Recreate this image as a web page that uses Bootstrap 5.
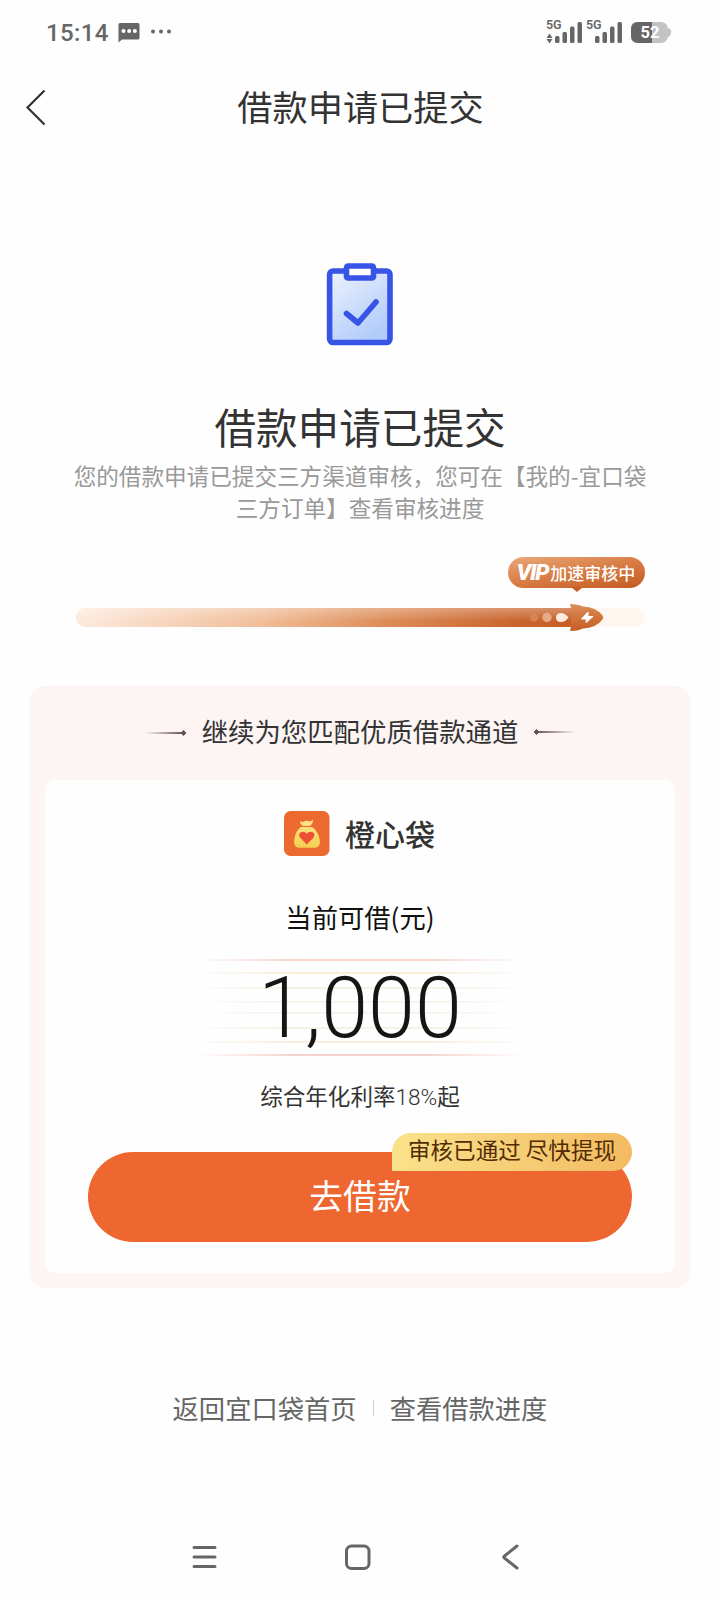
<!DOCTYPE html>
<html lang="zh-CN">
<head>
<meta charset="utf-8">
<meta name="viewport" content="width=device-width, initial-scale=1">
<title>借款申请已提交</title>
<link href="https://cdn.jsdelivr.net/npm/bootstrap@5.3.0/dist/css/bootstrap.min.css" rel="stylesheet">
<style>
body{font-family:"Noto Sans CJK SC",sans-serif;background:#fefefe;color:#333;width:720px;height:1600px;overflow:hidden}
svg{display:block;flex:none}
.latin{font-family:Roboto,sans-serif}
.status{height:62px;padding:2px 48px 0 46px;color:#666}
.clock{font-size:24px;font-weight:500;letter-spacing:.4px;line-height:28px;padding-top:1px}
.topbar{height:92px}
.topbar h1{font-size:35.2px;line-height:50px;margin:0 0 4px 1px}
.back{left:24px;top:25px}
.result{height:532px;padding-top:108px}
.result h2{font-size:41.6px;line-height:56px;margin:52px 0 0}
.desc{font-size:22.6px;line-height:32px;width:580px;color:#999;margin-top:6px}
.track{width:569px;height:19px;border-radius:10px;background:#fff6f0;margin-top:84px}
.fill{width:496px;height:19px;border-radius:10px 0 0 10px;background:linear-gradient(180deg,rgba(255,255,255,.3),rgba(255,255,255,0) 70%),linear-gradient(90deg,#fdeadd,#f0bd98 38%,#dd8d58 62%,#c9622b 90%,#c75e25)}
.rocket{left:450px;top:-5px}
.vip{right:0;top:-51px;width:137px;height:31px;border-radius:16px;background:linear-gradient(170deg,#e9a878,#d87c44 50%,#c35a22);color:#fff}
.vip:after{content:"";position:absolute;left:63px;top:30px;border:6px solid transparent;border-top:5px solid #c66027;border-bottom:0}
.vip b{font-family:Roboto,sans-serif;font-style:italic;font-weight:900;font-size:22.5px;letter-spacing:-1.2px;line-height:31px;margin-right:2px}
.vip span{font-size:17px;line-height:31px;font-weight:500;padding-bottom:1px}
.panel{width:660px;height:602px;margin-left:30px;border-radius:15px;background:#fdf5f3;padding:0 15px 14px}
.panel-title{height:94px;gap:14px;font-size:26.4px;line-height:38px;padding-bottom:4px}
.offer{height:493px;border-radius:10px;background:#fefefe;padding-top:31px}
.brand{gap:15px;height:46px}
.brand svg{margin-left:-1px}
.brand strong{font-size:30px;line-height:44px;font-weight:500;padding-bottom:3px}
.avail{font-size:26.3px;line-height:38px;color:#111;margin-top:41px}
.amount{width:350px;height:97px;margin-top:22px;background:#fefefe}
.stripe{left:0;top:1px}
.amount .latin{font-size:84.4px;font-weight:300;line-height:101px;color:#151515;position:relative}
.rate{font-size:22.56px;line-height:32px;margin-top:24px}
.rate .latin{font-weight:300}
.go{width:544px;height:90px;margin-top:38px;border:0;border-radius:45px;background:#ee6630;color:#fff;font-size:33.8px;line-height:48px;padding:0 0 5px}
.tip{right:0;top:-19px;width:240px;height:38px;border-radius:19px 19px 19px 0;background:linear-gradient(90deg,#f9e28b,#f3bb62);color:#522c04;font-size:22.56px;line-height:33px}
.links{height:50px;margin-top:95px;font-size:26.3px;line-height:38px;color:#666}
.links a{color:#666;text-decoration:none}
.links i{width:1px;height:16px;background:#ccc;margin:2px 16px}
.sysnav{margin-top:109px;padding-left:189px;gap:122px}
</style>
</head>
<body>
<header class="status d-flex align-items-center">
  <span class="clock latin">15:14</span>
  <svg class="ms-2" width="60" height="24" viewBox="0 0 60 24" fill="#666"><path d="M3 3h18q1.500 0 1.500 1.500v13.500q0 1.500-1.500 1.500H5l-3.500 3V4.500Q1.500 3 3 3z"/><g fill="#fff"><circle cx="6.500" cy="11" r="2"/><circle cx="12.200" cy="11" r="2"/><circle cx="17.900" cy="11" r="2"/></g><circle cx="36" cy="11.500" r="2"/><circle cx="44" cy="11.500" r="2"/><circle cx="52" cy="11.500" r="2"/></svg>
  <svg class="ms-auto" width="126" height="28" viewBox="0 0 126 28" fill="#666">
    <g font-family="Roboto" font-weight="600" font-size="12.500"><text x="0" y="10.500" textLength="15.500">5G</text><text x="40" y="10.500" textLength="15.500">5G</text></g>
    <path d="M3.500 15.500l3 4.500h-6zM3.500 25.500l-3-4.500h6z"/>
    <g id="bars"><rect x="9" y="18" width="4.500" height="7" rx="1.500"/><rect x="16.500" y="14" width="4.500" height="11" rx="1.500"/><rect x="24" y="8.500" width="4.500" height="16.500" rx="1.500"/><rect x="31.500" y="4" width="4.500" height="21" rx="1.500"/></g>
    <use href="#bars" x="40"/>
    <rect x="85" y="4" width="37" height="21" rx="7" fill="#c3c3c3"/><path d="M122 10q4 1 3 5-1 4-3 4z" fill="#c3c3c3"/><path d="M92 4h14v21H92q-7 0-7-7v-7q0-7 7-7z"/>
    <text x="94.500" y="20" fill="#fff" font-family="Roboto" font-weight="700" font-size="16.500">52</text>
  </svg>
</header>
<nav class="topbar position-relative d-flex align-items-center justify-content-center">
  <svg class="back position-absolute" width="24" height="40" viewBox="0 0 24 40" fill="none" stroke="#333" stroke-width="2.200"><path d="M20.500 3.500 3.500 20.500l17 17"/></svg>
  <h1 class="fw-normal">借款申请已提交</h1>
</nav>
<section class="result d-flex flex-column align-items-center text-center">
  <svg width="68" height="84" viewBox="0 0 68 84"><defs><linearGradient id="paper" x1="0" y1="0" x2=".6" y2="1"><stop offset="0" stop-color="#edf3fe"/><stop offset="1" stop-color="#b1cbfa"/></linearGradient></defs><g stroke="#3854e6" stroke-width="5.600" stroke-linejoin="round" stroke-linecap="round"><rect x="3.600" y="9" width="60.400" height="71.500" rx="3.500" fill="url(#paper)"/><rect x="20.500" y="4" width="27" height="12" rx="1.500" fill="#fff"/><path d="M20.500 51.500 32 61l18-21" fill="none"/></g></svg>
  <h2 class="fw-normal">借款申请已提交</h2>
  <p class="desc mb-0">您的借款申请已提交三方渠道审核，您可在【我的-宜口袋三方订单】查看审核进度</p>
  <div class="track position-relative">
    <div class="fill"></div>
    <svg class="rocket position-absolute" width="80" height="29" viewBox="0 0 80 29"><defs><linearGradient id="hull" x1="0" y1="0" x2="0" y2="1"><stop offset="0" stop-color="#dc8e59"/><stop offset="1" stop-color="#c45c22"/></linearGradient></defs><circle cx="8" cy="14.500" r="4" fill="#d98253"/><circle cx="21" cy="14.500" r="4.700" fill="#e7aa86"/><path d="M30 14.500q0-4.500 5-4.500 4 0 7.500 4.500-3.500 4.500-7.500 4.500-5 0-5-4.500z" fill="#fdebdd"/><path d="M44 1q8 0 13 2.500 13 .5 19.500 9 1.200 2 0 4-6.500 8.500-19.500 9-5 2.500-13 2.500l1-4.500V5z" fill="url(#hull)"/><path d="m62 9-6.500 7h5l-.5 3.500 7-6h-5z" fill="#fff" stroke="#fff"/></svg>
    <div class="vip position-absolute d-flex align-items-center justify-content-center"><b>VIP</b><span>加速审核中</span></div>
  </div>
</section>
<main class="panel">
  <div class="panel-title d-flex align-items-center justify-content-center">
    <svg width="44" height="10" viewBox="0 0 44 10"><defs><linearGradient id="fade"><stop offset="0" stop-color="#655" stop-opacity="0"/><stop offset="1" stop-color="#655"/></linearGradient></defs><path d="M1 6h38v2H1z" fill="url(#fade)"/><path d="m39.500 4.500 2.500 2.500-2.500 2.500-2.500-2.500z" fill="#655" stroke="#655"/></svg>
    <span>继续为您匹配优质借款通道</span>
    <svg width="44" height="10" viewBox="0 0 44 10"><g transform="matrix(-1 0 0 1 44 -1)"><path d="M1 6h38v2H1z" fill="url(#fade)"/><path d="m39.500 4.500 2.500 2.500-2.500 2.500-2.500-2.500z" fill="#655" stroke="#655"/></g></svg>
  </div>
  <div class="offer d-flex flex-column align-items-center">
    <div class="brand d-flex align-items-center">
      <svg width="46" height="46" viewBox="0 0 46 46"><defs><linearGradient id="bag" x1="0" y1="0" x2="0" y2="1"><stop offset="0" stop-color="#ffe590"/><stop offset="1" stop-color="#f7cf4e"/></linearGradient></defs><rect width="45.500" height="45" rx="6.500" fill="#ec6a30"/><path d="M16 10q3 2 6-.5 4 2 7-.8 0 4-3 6 9 5 10 15.500 0 6.500-5 6.500H15q-5 0-5-6.500Q11 19 19 14.500q-3-1.500-3-4.500z" fill="url(#bag)"/><path d="M17.500 15.500h10" stroke="#ec6a30" stroke-width="1"/><path d="M22.800 33.500 16 26.500q-2-3 .7-5.200 3.600-1.600 6.100 1.500 2.500-3.100 6.100-1.500 2.700 2.200.7 5.200z" fill="#ed5135"/></svg>
      <strong>橙心袋</strong>
    </div>
    <div class="avail">当前可借(元)</div>
    <div class="amount position-relative text-center">
      <svg class="stripe position-absolute" width="350" height="97" viewBox="0 0 350 97"><defs><linearGradient id="r"><stop offset="0" stop-color="#f6d3cd" stop-opacity="0"/><stop offset=".3" stop-color="#f6d3cd"/><stop offset=".7" stop-color="#f6d3cd"/><stop offset="1" stop-color="#f6d3cd" stop-opacity="0"/></linearGradient><linearGradient id="y"><stop offset="0" stop-color="#faeedb" stop-opacity="0"/><stop offset=".3" stop-color="#faeedb"/><stop offset=".7" stop-color="#faeedb"/><stop offset="1" stop-color="#faeedb" stop-opacity="0"/></linearGradient><linearGradient id="g"><stop offset="0" stop-color="#f2f2e6" stop-opacity="0"/><stop offset=".3" stop-color="#f2f2e6"/><stop offset=".7" stop-color="#f2f2e6"/><stop offset="1" stop-color="#f2f2e6" stop-opacity="0"/></linearGradient></defs><path d="M10 0h330v2H10zM10 95h330v2H10z" fill="url(#r)"/><path d="M0 13h350v2H0zM0 82h350v2H0z" fill="url(#y)"/><path d="M0 28h350v2H0zM0 42h350v1.500H0zM0 53h350v1.500H0zM0 68h350v2H0z" fill="url(#g)"/></svg>
      <span class="latin">1,000</span>
    </div>
    <div class="rate">综合年化利率<span class="latin">18%</span>起</div>
    <button class="go btn position-relative">去借款<span class="tip position-absolute">审核已通过 尽快提现</span></button>
  </div>
</main>
<footer>
  <div class="links d-flex align-items-center justify-content-center"><a href="#">返回宜口袋首页</a><i></i><a href="#">查看借款进度</a></div>
  <div class="sysnav d-flex align-items-center">
    <svg width="31" height="30" viewBox="0 0 31 30" fill="none" stroke="#666" stroke-width="3" stroke-linecap="round"><path d="M5 5.500h21M5 15h21M5 24.500h21"/></svg>
    <svg width="31" height="30" viewBox="0 0 31 30" fill="none" stroke="#666" stroke-width="3"><rect x="4.500" y="4" width="22.500" height="22.500" rx="5"/></svg>
    <svg width="31" height="30" viewBox="0 0 31 30" fill="none" stroke="#666" stroke-width="3" stroke-linecap="round"><path d="M22 4 9.500 14q-1.500 1 0 2.200L22 26"/></svg>
  </div>
</footer>
<script src="https://cdn.jsdelivr.net/npm/bootstrap@5.3.0/dist/js/bootstrap.bundle.min.js"></script>
</body>
</html>
